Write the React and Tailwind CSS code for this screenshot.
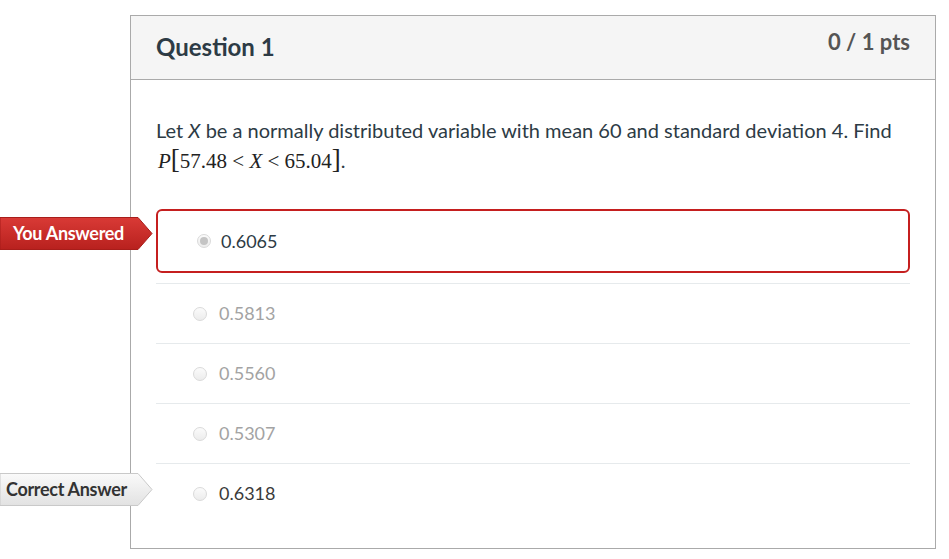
import React from "react";

const answers = [
  { value: "0.5813", muted: true },
  { value: "0.5560", muted: true },
  { value: "0.5307", muted: true },
  { value: "0.6318", muted: false, correct: true },
];

function Radio({ checked }) {
  return (
    <span className="relative inline-flex h-[14px] w-[14px] shrink-0 items-center justify-center rounded-full border border-[#dadada] bg-gradient-to-b from-[#fbfbfb] to-[#ececec]">
      {checked && <span className="h-[8px] w-[8px] rounded-full bg-[#c4c4c4]" />}
    </span>
  );
}

function Tag({ label, variant, className }) {
  const red = variant === "red";
  return (
    <div className={`absolute left-0 h-[33px] w-[153px] ${className}`}>
      <svg className="absolute inset-0" width="153" height="33" viewBox="0 0 153 33">
        <defs>
          <linearGradient id={`g-${variant}`} x1="0" y1="0" x2="0" y2="1">
            {red ? (
              <>
                <stop offset="0" stopColor="#d93a36" />
                <stop offset="1" stopColor="#b8211e" />
              </>
            ) : (
              <>
                <stop offset="0" stopColor="#fafafa" />
                <stop offset="1" stopColor="#e2e2e2" />
              </>
            )}
          </linearGradient>
        </defs>
        <polygon
          points="0,0.5 138,0.5 152,16.5 138,32.5 0,32.5"
          fill={`url(#g-${variant})`}
          stroke={red ? "#a81d1a" : "#c9c9c9"}
          strokeWidth="1"
        />
      </svg>
      <span
        className={`relative flex h-full items-center font-bold text-[18px] tracking-[-0.3px] ${
          red ? "pl-[13px] text-white" : "pl-[6px] text-[#333333]"
        }`}
      >
        {label}
      </span>
    </div>
  );
}

export default function App() {
  return (
    <div className="relative min-h-[559px] w-[949px] bg-white pl-[130px] pt-[15px] font-['Lato','Noto_Sans',sans-serif]">
      <div className="w-[806px] border border-[#aaaaaa] bg-white">
        <div className="flex h-[64px] items-start justify-between border-b border-[#aaaaaa] bg-[#f5f5f5] px-[25px]">
          <h2 className="pt-[13px] text-[24px] font-bold text-[#2d3b45]">Question 1</h2>
          <span className="pt-[9px] text-[22px] font-bold text-[#555555]">0 / 1 pts</span>
        </div>

        <div className="px-[25px] pb-[25px] pt-[35px]">
          <p className="text-[20px] leading-[30px] text-[#2d3b45]">
            Let <i>X</i> be a normally distributed variable with mean 60 and standard deviation 4. Find
            <br />
            <span className="pl-[2px] font-['Liberation_Serif',serif] text-[21px] text-[#222]">
              <i>P</i>
              <span className="text-[27px] leading-none">[</span>
              57.48 &lt; <i>X</i> &lt; 65.04
              <span className="text-[27px] leading-none">]</span>
            </span>
            .
          </p>

          <div className="mt-[33px] flex h-[64px] items-center gap-[10px] rounded-[6px] border-2 border-[#c51f1f] pl-[39px]">
            <Radio checked />
            <span className="text-[18px] text-[#2d3b45]">0.6065</span>
          </div>

          <div className="mt-[10px]">
            {answers.map((a) => (
              <div
                key={a.value}
                className="flex h-[60px] items-center gap-[12px] border-t border-[#e6eaec] pl-[37px]"
              >
                <Radio />
                <span className={`text-[18px] ${a.muted ? "text-[#a3a3a3]" : "text-[#3a3a3a]"}`}>
                  {a.value}
                </span>
              </div>
            ))}
          </div>
        </div>
      </div>

      <Tag label="You Answered" variant="red" className="top-[217px]" />
      <Tag label="Correct Answer" variant="gray" className="top-[473px]" />
    </div>
  );
}
